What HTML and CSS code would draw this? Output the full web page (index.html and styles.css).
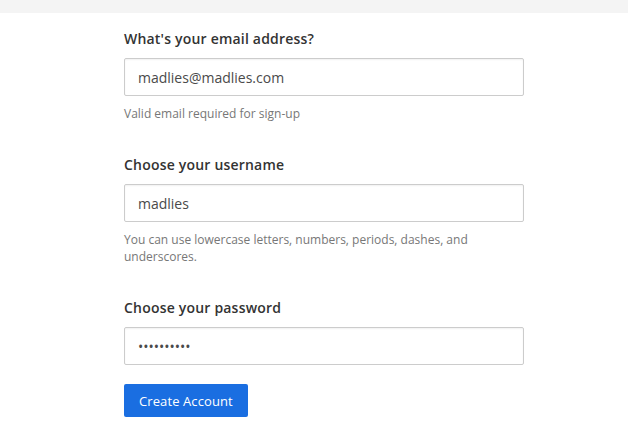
FILE: index.html
```html
<!DOCTYPE html>
<html lang="en">
<head>
<meta charset="utf-8">
<title>Sign up</title>
<link rel="stylesheet" href="styles.css">
</head>
<body>
<div class="topbar"></div>
<main class="page">
  <form class="signup">
    <div class="field">
      <label class="label" for="email">What's your email address?</label>
      <input class="input" id="email" type="text" value="madlies@madlies.com">
      <p class="help">Valid email required for sign-up</p>
    </div>
    <div class="field">
      <label class="label" for="username">Choose your username</label>
      <input class="input" id="username" type="text" value="madlies">
      <p class="help">You can use lowercase letters, numbers, periods, dashes, and underscores.</p>
    </div>
    <div class="field">
      <label class="label" for="password">Choose your password</label>
      <input class="input" id="password" type="password" value="madlies123">
    </div>
    <div class="actions">
      <button class="btn" type="button">Create Account</button>
    </div>
  </form>
</main>
</body>
</html>
```

FILE: styles.css
```css
* { box-sizing: border-box; }
html, body {
  margin: 0;
  padding: 0;
  background: #ffffff;
  font-family: "Open Sans", "Liberation Sans", sans-serif;
  color: #333333;
}
.topbar {
  height: 13px;
  background: #f4f4f4;
}
.page {
  padding: 16px 0 0 124px;
}
.signup {
  width: 400px;
  display: flex;
  flex-direction: column;
}
.field {
  display: flex;
  flex-direction: column;
  margin-bottom: 33px;
}
.label {
  font-size: 14px;
  font-weight: 600;
  letter-spacing: 0.2px;
  line-height: 20px;
  color: #333333;
  margin-bottom: 9px;
}
.input {
  height: 38px;
  width: 400px;
  border: 1px solid #cccccc;
  border-radius: 2px;
  box-shadow: inset 0 1px 2px rgba(0,0,0,0.06);
  padding: 0 13px;
  font-family: "Open Sans", "Liberation Sans", sans-serif;
  font-size: 14px;
  color: #4a4a4a;
  background: #ffffff;
  outline: none;
}
.help {
  margin: 9px 0 0;
  font-size: 12px;
  line-height: 17px;
  color: #777777;
}
.field:nth-child(3) {
  margin-bottom: 19px;
}
.actions {
  display: flex;
}
.btn {
  height: 33px;
  padding: 0 15px;
  border: none;
  border-radius: 2px;
  background: #1a6ee1;
  color: #ffffff;
  font-family: "Open Sans", "Liberation Sans", sans-serif;
  font-size: 13px;
  font-weight: 500;
  letter-spacing: 0.1px;
  cursor: pointer;
}
```
